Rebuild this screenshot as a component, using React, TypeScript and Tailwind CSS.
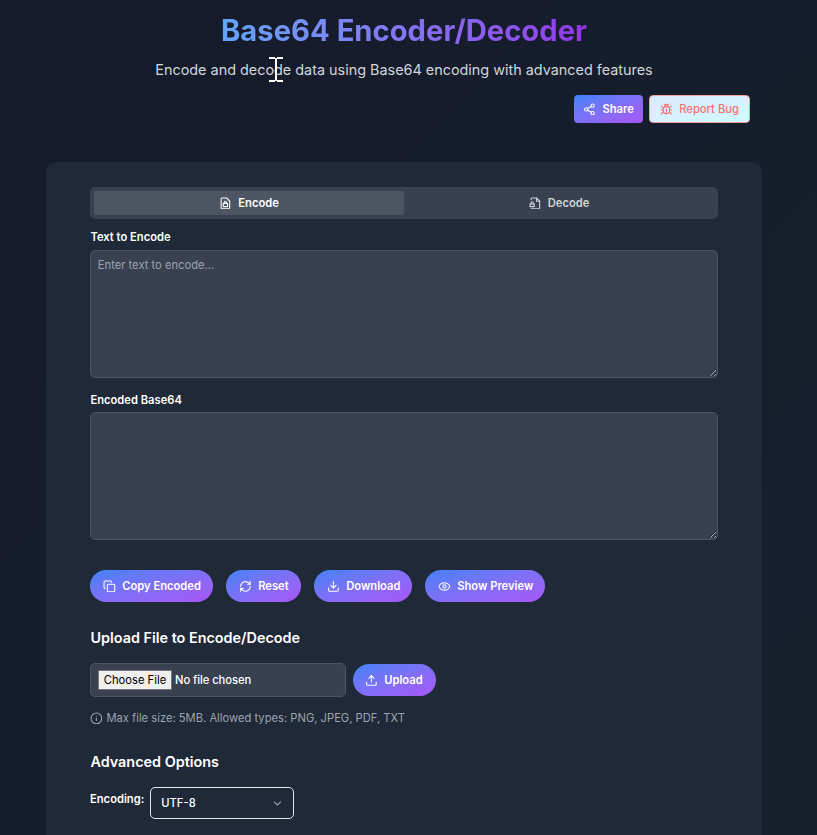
import React from "react";
import { Bug, ChevronDown, Copy, Download, Eye, Info, RefreshCw, Share2, Upload, type LucideIcon } from "lucide-react";

function PillButton({ icon: Icon, label, className }: { icon: LucideIcon; label: string; className: string }) {
  return (
    <button
      className={`flex h-8 shrink-0 items-center rounded-full bg-gradient-to-br from-[#3b82f6] to-[#a855f7] text-[11.2px] font-semibold whitespace-nowrap text-white ${className}`}
    >
      <Icon size={12.8} className="mr-[6.4px] shrink-0" />
      {label}
    </button>
  );
}

function TextBox({ placeholder }: { placeholder?: string }) {
  return (
    <textarea
      placeholder={placeholder}
      className="block h-32 w-full resize-y rounded-[5px] border border-[#4b5563] bg-[#394150] px-[6.8px] py-[6px] text-[11.2px] leading-4 text-white placeholder:text-[#9ca3af] focus:outline-none"
    />
  );
}

const iconProps = {
  width: 12.8,
  height: 12.8,
  viewBox: "0 0 24 24",
  fill: "none",
  stroke: "currentColor",
  strokeWidth: 2,
  strokeLinecap: "round",
  strokeLinejoin: "round",
} as const;

function LockedFileIcon() {
  return (
    <svg {...iconProps} className="mr-[6.4px]">
      <path d="M14.5 2H6a2 2 0 0 0-2 2v16a2 2 0 0 0 2 2h12a2 2 0 0 0 2-2V7.5L14.5 2z" />
      <rect width="8" height="6" x="8" y="12" />
      <path d="M10 12v-2a2 2 0 1 1 4 0v2" />
    </svg>
  );
}

function SideLockedFileIcon() {
  return (
    <svg {...iconProps} className="mr-[6.4px]">
      <path d="M4 5V4a2 2 0 0 1 2-2h8.5L20 7.5V20a2 2 0 0 1-2 2H4" />
      <path d="M14 2v6h6" />
      <rect width="8" height="5" x="2" y="13" />
      <path d="M8 13v-2a2 2 0 1 0-4 0v2" />
    </svg>
  );
}

function TextCursor() {
  return (
    <svg className="absolute top-[57px] left-[269px]" width="14" height="25" viewBox="0 0 14 25" fill="none">
      <path d="M0 1h6M8 1h6M7 1v23M0 24h6M8 24h6" stroke="white" strokeWidth="2" />
    </svg>
  );
}

export default function App() {
  return (
    <div className="relative h-[835px] w-full overflow-hidden bg-gradient-to-br from-[#151a2a] to-[#17212e] font-['Inter',sans-serif] text-white">
      <div className="w-[808px]">
        <header className="flex flex-col items-center pt-[13px]">
          <h1 className="bg-gradient-to-r from-[#60a5fa] to-[#9333ea] bg-clip-text text-[29.2px] leading-9 font-bold text-transparent">
            Base64 Encoder/Decoder
          </h1>
          <p className="mt-[10px] text-[14.4px] leading-[22px] text-[#d1d5db]">
            Encode and decode data using Base64 encoding with advanced features
          </p>
        </header>

        <div className="mt-[14px] mr-[58px] flex justify-end gap-[6px]">
          <button className="flex h-7 w-[69px] items-center justify-center rounded bg-gradient-to-br from-[#3b82f6] to-[#a855f7] text-[11.2px] font-semibold">
            <Share2 size={12.8} className="mr-[6.4px]" />
            Share
          </button>
          <button className="flex h-7 w-[101px] items-center justify-center rounded border border-[#f0a0a6] bg-gradient-to-br from-[#dbeafe] to-[#cffafe] text-[11.2px] font-medium text-[#f87171]">
            <Bug size={12.8} className="mr-[6.4px]" />
            Report Bug
          </button>
        </div>

        <main className="mt-[39px] ml-[46px] h-[760px] w-[716px] rounded-[10px] bg-[#202937] px-11 pt-[25px]">
          <div className="flex h-8 rounded-[5px] bg-[#394150] p-1 text-[11.2px] font-semibold">
            <button className="flex w-[310px] items-center justify-center rounded-[2px] bg-[#4d5563]">
              <LockedFileIcon />
              Encode
            </button>
            <button className="flex flex-1 items-center justify-center text-[#d1d5db]">
              <SideLockedFileIcon />
              Decode
            </button>
          </div>

          <label className="mt-[10px] mb-[5px] block pl-[0.4px] text-[11.2px] leading-4 font-semibold">
            Text to Encode
          </label>
          <TextBox placeholder="Enter text to encode..." />
          <label className="mt-[14px] mb-1 block pl-[0.4px] text-[11.2px] leading-4 font-semibold">
            Encoded Base64
          </label>
          <TextBox />

          <div className="mt-[30px] flex gap-[13px]">
            <PillButton icon={Copy} label="Copy Encoded" className="w-[123px] pl-[13px]" />
            <PillButton icon={RefreshCw} label="Reset" className="w-[75px] pl-[13px]" />
            <PillButton icon={Download} label="Download" className="w-[98px] pl-[13px]" />
            <PillButton icon={Eye} label="Show Preview" className="w-[120px] pl-[13px]" />
          </div>

          <h2 className="mt-[25px] pl-[0.4px] text-[14.4px] leading-[22px] font-semibold">
            Upload File to Encode/Decode
          </h2>
          <div className="mt-[14px] flex items-center gap-[7px]">
            <div className="flex h-[34px] w-64 items-center rounded-[5px] border border-[#4b5563] bg-[#394150] pl-[7px] text-[11.2px] font-medium tracking-[-0.06px]">
              <button className="mr-[3px] h-5 w-[74px] border border-[#767676] bg-[#efefef] text-[11.2px] leading-[18px] font-normal tracking-normal whitespace-nowrap text-black">
                Choose File
              </button>
              No file chosen
            </div>
            <PillButton icon={Upload} label="Upload" className="w-[83px] pl-3" />
          </div>
          <p className="mt-[13px] flex items-center text-[11.2px] leading-4 text-[#9ca3af]">
            <Info size={12.8} className="mr-[3.6px]" />
            Max file size: 5MB. Allowed types: PNG, JPEG, PDF, TXT
          </p>

          <h2 className="mt-[25px] pl-[0.4px] text-[14.4px] leading-[22px] font-semibold">Advanced Options</h2>
          <div className="mt-[14px] flex items-start text-[11.2px]">
            <label className="mt-1 mr-[6px] leading-4 font-semibold">Encoding:</label>
            <button className="flex h-8 w-36 items-center justify-between rounded-[5px] border border-[#e5e7eb] pr-[9px] pl-[10px] font-medium">
              UTF-8
              <ChevronDown size={12.8} className="text-[#9ca3af]" />
            </button>
          </div>
        </main>
      </div>
      <TextCursor />
    </div>
  );
}
